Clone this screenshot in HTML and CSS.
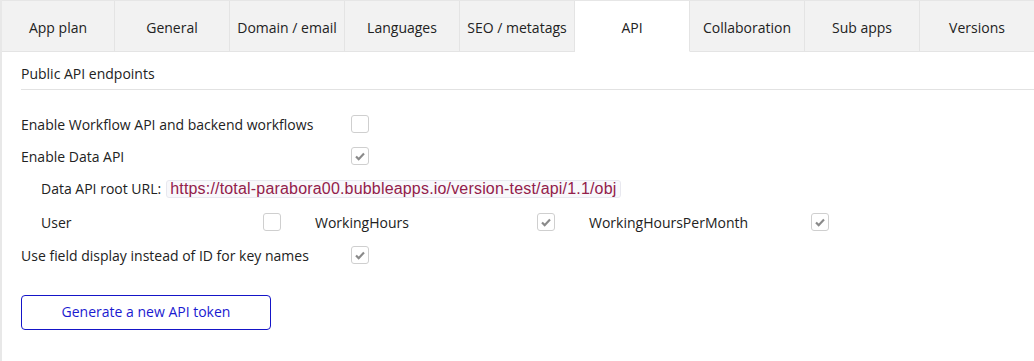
FILE: index.html
```html
<!DOCTYPE html>
<html>
<head>
<meta charset="utf-8">
<link rel="stylesheet" href="styles.css">
</head>
<body>
<div class="page">
  <div class="tabs">
    <div class="tab">App plan</div>
    <div class="tab">General</div>
    <div class="tab">Domain / email</div>
    <div class="tab">Languages</div>
    <div class="tab">SEO / metatags</div>
    <div class="tab active">API</div>
    <div class="tab">Collaboration</div>
    <div class="tab">Sub apps</div>
    <div class="tab">Versions</div>
  </div>
  <div class="content">
    <div class="section-title">Public API endpoints</div>
    <div class="rows">
      <div class="row">
        <span class="label">Enable Workflow API and backend workflows</span>
        <span class="cb"></span>
      </div>
      <div class="row">
        <span class="label">Enable Data API</span>
        <span class="cb checked"><svg viewBox="0 0 18 18"><path d="M4.5 9.5 L7.5 12.5 L13.5 6.2" fill="none" stroke="#8a8a8a" stroke-width="2.4"/></svg></span>
      </div>
      <div class="row sub">
        <span class="url-label">Data API root URL:</span>
        <code class="url">https://total-parabora00.bubbleapps.io/version-test/api/1.1/obj</code>
      </div>
      <div class="row sub types">
        <div class="type"><span class="tlabel">User</span><span class="cb"></span></div>
        <div class="type"><span class="tlabel">WorkingHours</span><span class="cb checked"><svg viewBox="0 0 18 18"><path d="M4.5 9.5 L7.5 12.5 L13.5 6.2" fill="none" stroke="#8a8a8a" stroke-width="2.4"/></svg></span></div>
        <div class="type"><span class="tlabel">WorkingHoursPerMonth</span><span class="cb checked"><svg viewBox="0 0 18 18"><path d="M4.5 9.5 L7.5 12.5 L13.5 6.2" fill="none" stroke="#8a8a8a" stroke-width="2.4"/></svg></span></div>
      </div>
      <div class="row">
        <span class="label">Use field display instead of ID for key names</span>
        <span class="cb checked"><svg viewBox="0 0 18 18"><path d="M4.5 9.5 L7.5 12.5 L13.5 6.2" fill="none" stroke="#8a8a8a" stroke-width="2.4"/></svg></span>
      </div>
    </div>
    <button class="btn">Generate a new API token</button>
  </div>
</div>
</body>
</html>
```
FILE: styles.css
```css
html, body {
  margin: 0;
  padding: 0;
  background: #fff;
}
body {
  font-family: "Open Sans", "Liberation Sans", sans-serif;
  font-size: 14px;
  color: #222;
}
.page {
  width: 1034px;
  height: 361px;
  border-left: 2px solid #e8e8e8;
  box-sizing: border-box;
  overflow: hidden;
}
.tabs {
  display: flex;
  height: 52px;
  border-top: 1px solid #e6e6e6;
  box-sizing: border-box;
}
.tab {
  width: 115px;
  flex: none;
  background: #f2f2f2;
  border-right: 1px solid #e4e4e4;
  border-bottom: 1px solid #e4e4e4;
  box-sizing: border-box;
  display: flex;
  align-items: center;
  justify-content: center;
  padding-top: 2px;
  color: #222;
}
.tab:first-child {
  width: 113px;
}
.tab:last-child {
  flex: 1;
  border-right: none;
}
.tab.active {
  background: #fff;
  border-bottom-color: #fff;
}
.content {
  padding-left: 19px;
}
.section-title {
  height: 38px;
  border-bottom: 1px solid #e2e2e2;
  box-sizing: border-box;
  padding-top: 12px;
  line-height: 20px;
  color: #222;
}
.rows {
  padding-top: 18px;
  display: flex;
  flex-direction: column;
}
.row {
  display: flex;
  align-items: center;
  height: 32px;
  color: #222;
}
.row:nth-child(3) {
  height: 33px;
}
.row:nth-child(4) {
  height: 34px;
}
.label {
  width: 330px;
}
.sub {
  padding-left: 20px;
}
.cb {
  width: 16px;
  height: 16px;
  border: 1px solid #cfcfcf;
  border-radius: 3px;
  box-sizing: content-box;
  display: inline-flex;
  align-items: center;
  justify-content: center;
  background: #fff;
}
.cb svg {
  width: 16px;
  height: 16px;
}
.url-label {
  margin-right: 5px;
}
.url {
  font-family: "Liberation Sans", Arial, sans-serif;
  font-size: 16px;
  letter-spacing: 0.18px;
  color: #93204a;
  background: #f8f8fb;
  border: 1px solid #e8e8ef;
  border-radius: 3px;
  padding: 0 3px;
  line-height: 16px;
}
.type {
  display: flex;
  align-items: center;
  width: 274px;
}
.tlabel {
  width: 222px;
}
.btn {
  margin-top: 24px;
  width: 250px;
  height: 35px;
  border: 1px solid #1515c8;
  border-radius: 4px;
  background: #fff;
  color: #1a1ad0;
  font-family: "Open Sans", "Liberation Sans", sans-serif;
  font-size: 14px;
  padding: 0 0 2px;
  display: block;
}
```
